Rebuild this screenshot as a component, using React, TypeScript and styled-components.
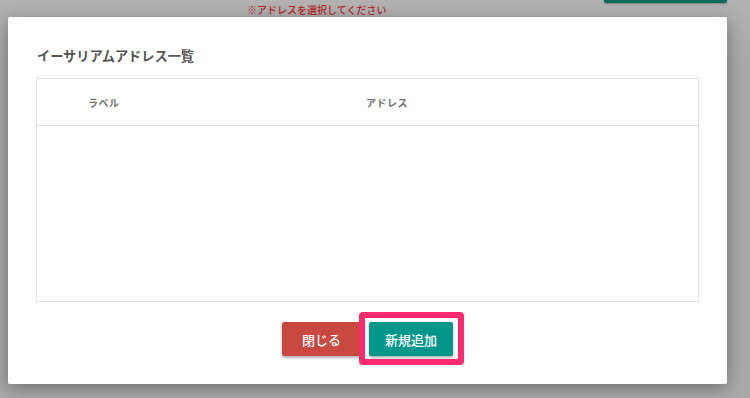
import React from "react";
import styled, { createGlobalStyle } from "styled-components";

const Global = createGlobalStyle`
  html, body { margin: 0; padding: 0; }
  body {
    background: #ababab;
    font-family: "Noto Sans CJK JP", "Noto Sans", sans-serif;
    overflow: hidden;
  }
`;

const Page = styled.div`
  width: 750px;
  height: 398px;
  box-sizing: border-box;
  padding: 0 23px 0 8px;
  display: flex;
  flex-direction: column;
  background: linear-gradient(#b2b2b2, #a9a9a9 60px, #a9a9a9);
`;

const TopBar = styled.div`
  height: 17px;
  display: flex;
  align-items: flex-start;
`;

const Notice = styled.span`
  margin-left: 239px;
  margin-top: 3px;
  font-size: 10px;
  line-height: 14px;
  font-weight: 500;
  color: #b8262b;
  white-space: nowrap;
`;

const Spacer = styled.div`
  flex: 1;
`;

const CutButton = styled.div`
  width: 123px;
  height: 3px;
  background: #0c6b5f;
  border-radius: 0 0 2px 2px;
  box-shadow: 0 1px 2px rgba(0, 0, 0, 0.3);
`;

const Modal = styled.div`
  width: 719px;
  height: 367px;
  box-sizing: border-box;
  background: #fff;
  border-radius: 2px;
  box-shadow: 0 4px 18px rgba(0, 0, 0, 0.35);
  padding: 29px 28px 28px 28px;
  display: flex;
  flex-direction: column;
`;

const Title = styled.h2`
  margin: 0 0 12px 1px;
  font-size: 13.2px;
  line-height: 20px;
  font-weight: 700;
  color: #555;
`;

const Table = styled.div`
  height: 224px;
  box-sizing: border-box;
  border: 1px solid #e2e2e2;
  display: flex;
  flex-direction: column;
`;

const HeaderRow = styled.div`
  height: 47px;
  box-sizing: border-box;
  border-bottom: 1px solid #e2e2e2;
  display: grid;
  grid-template-columns: 278px 1fr;
  align-items: center;
  padding-left: 51px;
`;

const HeaderCell = styled.span`
  font-size: 10px;
  font-weight: 700;
  color: #737373;
  letter-spacing: 0.5px;
`;

const Footer = styled.div`
  margin-top: 20px;
  display: flex;
  justify-content: center;
  gap: 8px;
`;

const Button = styled.button<{ $tone: "danger" | "primary" }>`
  height: 34px;
  min-width: ${(p) => (p.$tone === "danger" ? "79px" : "84px")};
  border: none;
  border-radius: 2px;
  padding: 0 16px;
  font-family: inherit;
  font-size: 13px;
  font-weight: 500;
  color: #fff;
  background: ${(p) => (p.$tone === "danger" ? "#c9483f" : "#00968a")};
  box-shadow: 0 2px 3px rgba(0, 0, 0, 0.3);
  cursor: pointer;
`;

const Highlight = styled.div`
  position: relative;
  display: flex;
  &::after {
    content: "";
    position: absolute;
    top: -10px;
    left: -10px;
    right: -11px;
    bottom: -9px;
    border: 6px solid #ff2a6e;
    border-radius: 4px;
    pointer-events: none;
  }
`;

export default function App() {
  return (
    <>
      <Global />
      <Page>
        <TopBar>
          <Notice>※アドレスを選択してください</Notice>
          <Spacer />
          <CutButton />
        </TopBar>
        <Modal>
          <Title>イーサリアムアドレス一覧</Title>
          <Table>
            <HeaderRow>
              <HeaderCell>ラベル</HeaderCell>
              <HeaderCell>アドレス</HeaderCell>
            </HeaderRow>
          </Table>
          <Footer>
            <Button $tone="danger">閉じる</Button>
            <Highlight>
              <Button $tone="primary">新規追加</Button>
            </Highlight>
          </Footer>
        </Modal>
      </Page>
    </>
  );
}
